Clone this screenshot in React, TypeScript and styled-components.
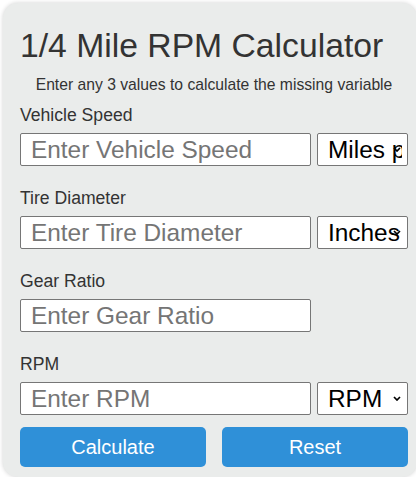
import { createGlobalStyle, styled } from 'styled-components';

const GlobalStyle = createGlobalStyle`
  body {
    margin: 0;
    background: #fff;
    font-family: "Liberation Sans", Arial, sans-serif;
  }
`;

type Field = {
  label: string;
  placeholder: string;
  units?: string[];
};

const fields: Field[] = [
  { label: 'Vehicle Speed', placeholder: 'Enter Vehicle Speed', units: ['Miles per hour', 'Kilometers per hour'] },
  { label: 'Tire Diameter', placeholder: 'Enter Tire Diameter', units: ['Inches', 'Centimeters'] },
  { label: 'Gear Ratio', placeholder: 'Enter Gear Ratio' },
  { label: 'RPM', placeholder: 'Enter RPM', units: ['RPM'] },
];

// small chevron drawn over the select, like the native arrow
const Arrow = () => (
  <S.arrow width="8" height="5" viewBox="0 0 8 5">
    <path d="M1 1l3 3 3-3" fill="none" stroke="#000" strokeWidth="1.7" />
  </S.arrow>
);

const App = () => {
  return (
    <>
      <GlobalStyle />
      <S.card>
        <S.title>1/4 Mile RPM Calculator</S.title>
        <S.subtitle>Enter any 3 values to calculate the missing variable</S.subtitle>
        {fields.map((f) => (
          <S.group key={f.label}>
            <S.label>{f.label}</S.label>
            <S.row>
              <S.input type="text" placeholder={f.placeholder} />
              {f.units && (
                <S.selectWrap>
                  <S.select defaultValue={f.units[0]}>
                    {f.units.map((u) => (
                      <option key={u}>{u}</option>
                    ))}
                  </S.select>
                  <Arrow />
                </S.selectWrap>
              )}
            </S.row>
          </S.group>
        ))}
        <S.buttons>
          <S.button>Calculate</S.button>
          <S.button>Reset</S.button>
        </S.buttons>
      </S.card>
    </>
  );
};

export default App;

const S = {
  card: styled.div`
    margin: 3px;
    width: 388px;
    padding: 23px 9px 10px 17px;
    background-color: #eaeceb;
    border-radius: 15px;
    box-shadow: 0 0 4px rgba(0, 0, 0, 0.18);
  `,
  title: styled.h1`
    margin: 0 0 11px;
    font-size: 33.7px;
    font-weight: normal;
    color: #333;
    line-height: normal;
  `,
  subtitle: styled.p`
    margin: 0 0 11px;
    text-align: center;
    font-size: 15.7px;
    color: #333;
  `,
  group: styled.div`
    margin-bottom: 22px;
  `,
  label: styled.label`
    display: block;
    margin-bottom: 7px;
    font-size: 17.6px;
    color: #333;
  `,
  row: styled.div`
    display: flex;
    gap: 6px;
  `,
  input: styled.input`
    box-sizing: border-box;
    width: 291px;
    height: 33px;
    padding: 0 10px;
    border: 1px solid #767676;
    border-radius: 2px;
    background: #fff;
    font-family: "Liberation Sans", Arial, sans-serif;
    font-size: 24.4px;
    color: #000;
    &::placeholder {
      color: #757575;
    }
  `,
  selectWrap: styled.div`
    position: relative;
    width: 91px;
  `,
  select: styled.select`
    box-sizing: border-box;
    appearance: none;
    width: 100%;
    height: 33px;
    padding: 0 5px 0 10px;
    border: 1px solid #767676;
    border-radius: 2px;
    background: #fff;
    font-family: "Liberation Sans", Arial, sans-serif;
    font-size: 24.4px;
    color: #000;
  `,
  arrow: styled.svg`
    position: absolute;
    right: 7px;
    top: 14px;
    pointer-events: none;
  `,
  buttons: styled.div`
    display: grid;
    grid-template-columns: 1fr 1fr;
    gap: 16px;
    margin-top: -10px;
  `,
  button: styled.button`
    height: 40px;
    border: none;
    border-radius: 5px;
    background-color: #2f90d8;
    color: #fff;
    font-family: "Liberation Sans", Arial, sans-serif;
    font-size: 20px;
  `,
};
